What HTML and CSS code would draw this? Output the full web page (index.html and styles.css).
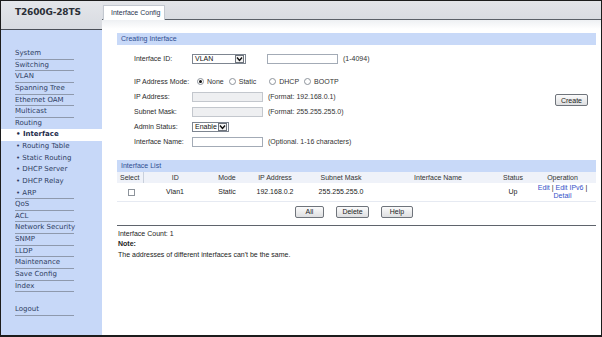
FILE: index.html
```html
<!DOCTYPE html>
<html lang="en">
  <head>
    <meta charset="UTF-8" />
    <title>Interface Config</title>
    <link rel="stylesheet" href="styles.css">
  </head>
  <body>
    <div class="frame">
      <div class="side">
        <div class="brand">T2600G-28TS</div>
        <ul class="menu">
          <li class="item">System</li>
          <li class="item">Switching</li>
          <li class="item">VLAN</li>
          <li class="item">Spanning Tree</li>
          <li class="item">Ethernet OAM</li>
          <li class="item">Multicast</li>
          <li class="item plain">Routing</li>
          <li class="sub current">• Interface</li>
          <li class="sub">• Routing Table</li>
          <li class="sub">• Static Routing</li>
          <li class="sub">• DHCP Server</li>
          <li class="sub">• DHCP Relay</li>
          <li class="item sub-last">• ARP</li>
          <li class="item">QoS</li>
          <li class="item">ACL</li>
          <li class="item">Network Security</li>
          <li class="item">SNMP</li>
          <li class="item">LLDP</li>
          <li class="item">Maintenance</li>
          <li class="item">Save Config</li>
          <li class="item">Index</li>
          <li class="item logout">Logout</li>
        </ul>
      </div>

      <div class="main">
        <div class="tabs">
          <span class="tab">Interface Config</span>
        </div>

        <div class="content">
          <div class="panel">
            <div class="bar">Creating Interface</div>
            <div class="form">
              <div class="row first">
                <span class="lbl">Interface ID:</span>
                <span class="select vlan"><span class="val">VLAN</span><span class="arrow"><svg width="7" height="6" viewBox="0 0 7 6"><polyline points="1,1.5 3.5,4.5 6,1.5" fill="none" stroke="#111" stroke-width="1.4"/></svg></span></span>
                <span class="input id-input"></span>
                <span class="hint">(1-4094)</span>
              </div>
              <div class="row">
                <span class="lbl">IP Address Mode:</span>
                <span class="radio on"></span><span class="rtext">None</span>
                <span class="radio"></span><span class="rtext">Static</span>
                <span class="radio gap"></span><span class="rtext">DHCP</span>
                <span class="radio"></span><span class="rtext">BOOTP</span>
              </div>
              <div class="row">
                <span class="lbl">IP Address:</span>
                <span class="input off"></span>
                <span class="hint">(Format: 192.168.0.1)</span>
                <button class="btn create">Create</button>
              </div>
              <div class="row">
                <span class="lbl">Subnet Mask:</span>
                <span class="input off"></span>
                <span class="hint">(Format: 255.255.255.0)</span>
              </div>
              <div class="row">
                <span class="lbl">Admin Status:</span>
                <span class="select status"><span class="val">Enable</span><span class="arrow"><svg width="7" height="6" viewBox="0 0 7 6"><polyline points="1,1.5 3.5,4.5 6,1.5" fill="none" stroke="#111" stroke-width="1.4"/></svg></span></span>
              </div>
              <div class="row">
                <span class="lbl">Interface Name:</span>
                <span class="input"></span>
                <span class="hint">(Optional. 1-16 characters)</span>
              </div>
            </div>
          </div>

          <div class="panel list">
            <div class="bar">Interface List</div>
            <table class="grid">
              <colgroup>
                <col class="c-sel"><col class="c-id"><col class="c-mode"><col class="c-ip">
                <col class="c-mask"><col class="c-name"><col class="c-status"><col class="c-op">
              </colgroup>
              <thead>
                <tr>
                  <th class="first">Select</th>
                  <th>ID</th>
                  <th>Mode</th>
                  <th>IP Address</th>
                  <th>Subnet Mask</th>
                  <th>Interface Name</th>
                  <th>Status</th>
                  <th>Operation</th>
                </tr>
              </thead>
              <tbody>
                <tr>
                  <td><span class="check"></span></td>
                  <td>Vlan1</td>
                  <td>Static</td>
                  <td>192.168.0.2</td>
                  <td>255.255.255.0</td>
                  <td></td>
                  <td>Up</td>
                  <td class="ops"><a href="#">Edit</a> | <a href="#">Edit IPv6</a> |<br><a href="#">Detail</a></td>
                </tr>
              </tbody>
            </table>
            <div class="actions">
              <button class="btn w-all">All</button>
              <button class="btn w-del">Delete</button>
              <button class="btn w-help">Help</button>
            </div>
          </div>

          <div class="info">
            <p>Interface Count: 1</p>
            <p class="note">Note:</p>
            <p>The addresses of different interfaces can't be the same.</p>
          </div>
        </div>
      </div>
    </div>
  </body>
</html>
```

FILE: styles.css
```css
* {
  margin: 0;
  padding: 0;
  box-sizing: border-box;
}
body {
  width: 602px;
  height: 337px;
  overflow: hidden;
  font: 7px "Liberation Sans", Arial, sans-serif;
  color: #222;
  background: #fff;
}
.frame {
  display: flex;
  width: 602px;
  height: 337px;
  border: 1px solid #1c1c1c;
  border-bottom-width: 2px;
}

/* left menu */
.side {
  width: 101px;
  flex-shrink: 0;
  background: #c7d8f8;
  display: flex;
  flex-direction: column;
}
.brand {
  height: 29px;
  padding: 6px 0 0 14px;
  line-height: 22px;
  background: linear-gradient(#e4e6ea, #d8dbe1);
  border-bottom: 1px solid #4a4f58;
  font: bold 9px "DejaVu Sans", Verdana, sans-serif;
  color: #2b2f36;
  letter-spacing: -0.15px;
}
.menu {
  list-style: none;
  padding-top: 18px;
  font: 7px "DejaVu Sans", Verdana, sans-serif;
  color: #2f4063;
}
.menu li {
  height: 11.63px;
  line-height: 10.8px;
  white-space: nowrap;
}
.item {
  margin-left: 14px;
  width: 59px;
  border-bottom: 1px solid #8e99ad;
}
.item.plain {
  border-bottom-color: transparent;
}
.sub {
  padding-left: 15px;
}
.item.sub-last {
  padding-left: 1px;
}
.current {
  background: #fff;
  font-weight: bold;
  color: #1d2c4c;
}
.logout {
  margin-top: 12px;
}

/* main area */
.main {
  flex: 1;
  display: flex;
  flex-direction: column;
  min-width: 0;
}
.tabs {
  height: 19px;
  display: flex;
  align-items: flex-end;
  padding-left: 1px;
  background: linear-gradient(#e2e4e8, #d9dce2);
  border-bottom: 1px solid #5b6068;
}
.tab {
  height: 15px;
  width: 62px;
  margin-bottom: -1px;
  padding-left: 7px;
  line-height: 14px;
  background: #fff;
  border: 1px solid #c3c8d0;
  border-bottom: none;
  color: #2a3550;
}
.content {
  flex: 1;
  padding: 13px 5px 0 15px;
  background: linear-gradient(#eef0f3, #fff 9px);
}
.bar {
  height: 12px;
  line-height: 12px;
  padding-left: 4px;
  background: #c8d9f8;
  color: #2f4e92;
}

/* form */
.form {
  padding: 6px 8px 0 17px;
}
.row {
  display: flex;
  align-items: center;
  height: 15px;
}
.row.first {
  margin-bottom: 8px;
}
.lbl {
  width: 58px;
  flex-shrink: 0;
  color: #2b2b2b;
}
.input {
  display: inline-block;
  width: 71px;
  height: 10px;
  border: 1px solid #a3abb6;
  background: #fff;
}
.input.off {
  background: #eeeff1;
  border-color: #c3c7cd;
}
.id-input {
  margin-left: 21px;
}
.hint {
  margin-left: 5px;
  color: #333;
}
.select {
  display: inline-flex;
  align-items: center;
  justify-content: space-between;
  height: 10px;
  padding: 0 1px 0 2px;
  border: 1px solid #7d8590;
  background: #fff;
  color: #111;
}
.select.vlan {
  width: 54px;
}
.select.status {
  width: 37px;
}
.arrow {
  width: 9px;
  height: 8px;
  border: 1px solid #6d737c;
  display: flex;
  align-items: center;
  justify-content: center;
  background: #f4f4f4;
}
.radio {
  width: 7px;
  height: 7px;
  border-radius: 50%;
  border: 1px solid #8d939b;
  background: #fff;
  margin: 0 3px 0 5px;
  position: relative;
}
.row .lbl + .radio {
  margin-left: 5px;
}
.radio.on::after {
  content: "";
  position: absolute;
  left: 1px;
  top: 1px;
  width: 3px;
  height: 3px;
  border-radius: 50%;
  background: #111;
}
.radio.gap {
  margin-left: 13px;
}
.rtext {
  color: #333;
}
.btn {
  height: 12px;
  font: 7px "Liberation Sans", Arial, sans-serif;
  color: #222;
  border: 1px solid #6f747b;
  border-radius: 2px;
  background: linear-gradient(#fbfbfb, #dedfe1);
}
.create {
  width: 33px;
  margin-left: auto;
  align-self: flex-end;
  margin-bottom: -2px;
}

/* interface list */
.list {
  margin-top: 11px;
}
.grid {
  width: 100%;
  border-collapse: collapse;
  table-layout: fixed;
}
.c-sel { width: 26px; }
.c-id { width: 64px; }
.c-mode { width: 40px; }
.c-ip { width: 56px; }
.c-mask { width: 76px; }
.c-name { width: 118px; }
.c-status { width: 32px; }
.c-op { width: 67px; }
.grid th {
  height: 11px;
  font-weight: normal;
  background: #eff2f9;
  color: #333;
  text-align: center;
}
.grid th.first {
  text-align: left;
  padding-left: 3px;
  border-right: 1px solid #c9d0dc;
}
.grid td {
  height: 18px;
  text-align: center;
  color: #222;
  border-bottom: 1px solid #e6eaf2;
}
.check {
  display: inline-block;
  width: 7px;
  height: 7px;
  border: 1px solid #8d939b;
  background: #fff;
  margin-left: 2px;
  vertical-align: middle;
}
.ops {
  line-height: 8px;
}
.ops a {
  color: #3452c8;
  text-decoration: none;
}
.actions {
  display: flex;
  justify-content: center;
  gap: 12px;
  margin-top: 4px;
  padding-right: 5px;
  padding-bottom: 7px;
  border-bottom: 1px solid #5f646c;
}
.w-all { width: 29px; }
.w-del { width: 33px; }
.w-help { width: 32px; }

.info {
  padding: 3px 0 0 1px;
  line-height: 10.5px;
  color: #222;
}
.note {
  font-weight: bold;
}
```
